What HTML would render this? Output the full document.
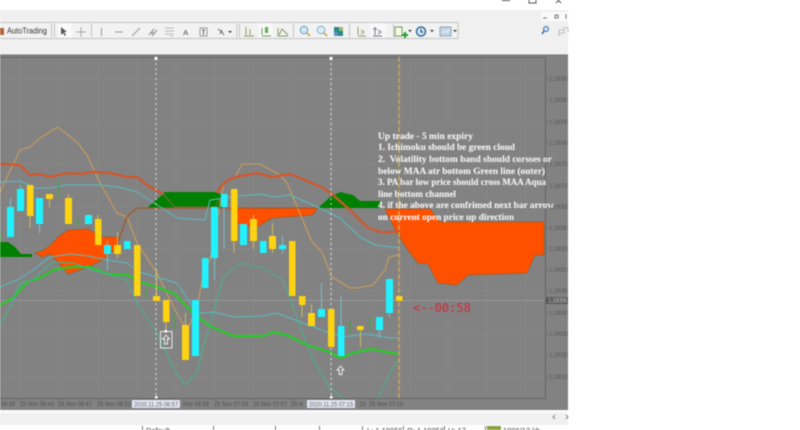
<!DOCTYPE html>
<html><head><meta charset="utf-8"><style>
html,body{margin:0;padding:0;width:800px;height:430px;overflow:hidden;background:#fff}
svg{display:block;filter:blur(.4px)}
.t{font-family:"Liberation Serif",serif;font-weight:bold;font-size:9.45px;fill:#f2f2f2;stroke:#f2f2f2;stroke-width:.12px}
.a{font-family:"Liberation Sans",sans-serif;font-size:6.2px;fill:#5e5e5e}
.x{font-family:"Liberation Sans",sans-serif;font-size:6.5px;fill:#505050}
.s{font-family:"Liberation Sans",sans-serif;font-size:7.5px;fill:#333}
.ln{fill:none;stroke-linejoin:round;stroke-linecap:round}
</style></head><body>
<svg width="800" height="430" viewBox="0 0 800 430" xmlns="http://www.w3.org/2000/svg">
<rect width="800" height="430" fill="#fff"/>
<rect x="0" y="10" width="568" height="415" fill="#f0f0f0"/>
<!-- window controls -->
<g stroke="#555" fill="none" stroke-width="1"><path d="M502 .5h8"/><rect x="529" y="-3" width="7" height="6"/><path d="M556 -2l5 5m0-5l-5 5"/></g>
<rect x="541" y="12" width="27" height="9" fill="#fafafa"/>
<g stroke="#777" fill="none" stroke-width="1"><path d="M543 18h4M555 15h3v3h-3zM566 14v5"/></g>
<!-- toolbar -->
<rect x="0" y="22" width="458" height="16" fill="#f2f2f2"/>
<path d="M0 22.5H458M0 38.5H458M458 22v17" stroke="#c4c4c4" fill="none"/>
<rect x="0" y="28" width="4" height="7" fill="#b5603a"/>
<text x="7" y="33.500" font-family="Liberation Sans,sans-serif" font-size="8.200" fill="#333" textLength="40" lengthAdjust="spacingAndGlyphs">AutoTrading</text>
<path d="M51.5 24v13M54.5 24v13M91.5 24v13M237 24v13M239.5 24v13M293.5 24v13M349.5 24v13M393.5 24v13" stroke="#c4c4c4" fill="none"/>
<rect x="58" y="23" width="14" height="15" fill="#fafafa"/>
<path d="M61 27l0 8 2-2 2 3 1-1-2-3 3 0z" fill="#555"/>
<path d="M81 27v10M76 32h10" stroke="#aaa" fill="none"/>
<path d="M101.500 28v8M115 32h8M132 36l8-8" stroke="#999" fill="none"/>
<path d="M149 35l5-6M152 36l5-6M150 33h5" stroke="#888" fill="none"/>
<path d="M165 28h9M165 31h9M165 34h9M170 36h3" stroke="#bbb" fill="none"/>
<text x="183" y="35" font-family="Liberation Sans,sans-serif" font-size="7.500" font-weight="bold" fill="#777">A</text>
<rect x="200" y="28" width="7" height="8" fill="#f5f5f5" stroke="#999"/><path d="M202 30h3M203.500 30v5" stroke="#666" fill="none"/>
<path d="M218 29l4 3 2 3M220 34l2-4" stroke="#666" fill="none"/><path d="M228 31h4l-2 2z" fill="#333"/>
<path d="M246 27v8M250 29v6M244 36h10" stroke="#8a9a60" fill="none"/>
<rect x="258" y="23" width="15" height="15" fill="#f8f8f8"/><rect x="265" y="27" width="3" height="6" fill="#5ab05a"/><path d="M262 28v7M262 36h9" stroke="#6a9a50" fill="none"/>
<path d="M279 35l3-6 4 4 2 2M278 28v8h10" stroke="#8a9a70" fill="none"/>
<circle cx="304" cy="30" r="3.800" fill="#cfe6f0" stroke="#6aa4c4"/><path d="M307 33l3 3" stroke="#c8a040" stroke-width="1.500"/>
<circle cx="321" cy="30" r="3.800" fill="#dcecf3" stroke="#7ab0cc"/><path d="M324 33l3 3" stroke="#c8a040" stroke-width="1.500"/>
<rect x="334" y="27" width="9" height="9" fill="#2a8a8a"/><rect x="339" y="27" width="4" height="4" fill="#9ab870"/><rect x="334" y="32" width="4" height="4" fill="#6090c0"/>
<path d="M358 27v8M358 36h8M361 30l3 2-3 2" stroke="#8a9a70" fill="none"/>
<rect x="370" y="23" width="16" height="15" fill="#f8f8f8"/><path d="M375 27v8M373 36h9M378 30l3 2-3 2M373 29h4" stroke="#778" fill="none"/>
<rect x="395" y="27" width="7" height="9" fill="#f5f8e8" stroke="#7a9a50"/><path d="M405 32v6M402 35h6" stroke="#20a030" stroke-width="2"/><path d="M408 30h4l-2 2z" fill="#333"/>
<circle cx="421" cy="31.500" r="4.500" fill="#dbe9f5" stroke="#2a6ea8" stroke-width="1.500"/><path d="M421 29v3h2" stroke="#234" fill="none"/><path d="M430 30h4l-2 2z" fill="#333"/>
<rect x="440" y="27" width="11" height="9" fill="#c4d6e4" stroke="#8aa6ba"/><path d="M442 33l3-2 2 1 3-3" stroke="#eee" fill="none"/><path d="M453 30h4l-2 2z" fill="#333"/>
<circle cx="546" cy="29" r="2.500" fill="#cfe3f2" stroke="#2f6ea8"/><path d="M544 31l-2 3" stroke="#2f5ea0" stroke-width="1.500"/>
<path d="M559 30h5v3h-3l-2 2zM563 28h5v4" fill="#f5f5f5" stroke="#bbb"/>
<!-- chart -->
<rect x="0" y="55" width="568" height="355" fill="#828282"/>
<path d="M0 55H568" stroke="#747474"/>
<path d="M0 57.500H545.500V398.500H0" stroke="#636363" fill="none"/>
<g stroke="#8f8f8f" stroke-width=".7" stroke-dasharray="2 2" fill="none">
<path d="M20 58V398M59 58V398M98 58V398M137 58V398M176 58V398M215 58V398M254 58V398M293 58V398M332 58V398M371 58V398M410 58V398M448 58V398M487 58V398M526 58V398"/>
<path d="M0 79H545M0 122H545M0 164H545M0 207H545M0 249H545M0 291H545M0 334H545M0 377H545"/>
</g>
<path d="M0 300.500H545" stroke="#989898"/>
<g stroke="#6c6c6c" fill="none"><path d="M20 398v3M59 398v3M98 398v3M137 398v3M176 398v3M215 398v3M254 398v3M293 398v3M332 398v3M371 398v3M545 79h3M545 100h3M545 122h3M545 143h3M545 164h3M545 186h3M545 207h3M545 228h3M545 249h3M545 270h3M545 291h3M545 313h3M545 334h3M545 355h3M545 377h3"/></g>
<!-- clouds -->
<g fill="#ff5000" stroke="#a85a20" stroke-width=".8">
<path d="M35 253L42 251L50 246L58 237L68 230L88 229L102 237L118 237L118 247L102 260L88 267L68 274L58 262L50 254L42 257Z"/>
<path d="M230 208L318 208L312 215L272 218L257 227L240 225L233 217Z"/>
<path d="M385 209L430 209L440 222L544 222L544 255L535 255L527 273L468 275L457 285L438 283L428 264L418 263L408 250L397 233Z"/>
</g>
<g fill="#008000">
<path d="M0 242L8 242L15 247L21 254L32 254L32 257L0 257Z"/>
<path d="M147 208L165 192L217 192L225 198L222 208Z"/>
<path d="M318 208L330 197L340 192L353 195L360 201L380 201L380 208Z"/>
</g>
<path d="M0 231V242" stroke="#30c030"/>
<!-- indicator lines -->
<g class="ln" stroke="#cb9c5c" stroke-width="1.100">
<polyline points="0,192 20,150 30,147 40,138 58,127 78,143 88,157 100,183 117,213 127,217 137,243 157,273 175,310 185,327 190,325 199,297 204,270 210,260"/>
<polyline points="210,260 224,183 235,177 242,164 260,164 280,175 287,183 312,242 322,252 332,277 337,280 350,288 357,288 373,285 385,270 389,257 399,255"/>
</g>
<g class="ln" stroke="#d5562a" stroke-width="2.200">
<polyline points="0,164 20,165 30,175 40,174 50,177 67,173 80,174 93,172 110,173 127,177 137,177 147,185 163,194"/>
<polyline points="217,192 225,182 235,177 257,173 272,177 290,174 305,180 323,188 333,195 350,210 367,227 380,232 390,232 400,232"/>
</g>
<path class="ln" d="M163 194L175 207H215L222 195" stroke="#7d6a3a" stroke-width="1"/>
<path class="ln" d="M118 242L127 217L137 208H318" stroke="#a0592c" stroke-width="1.300"/>
<g class="ln" stroke="#58bcc4" stroke-width="1">
<polyline points="0,182 20,181 35,188 50,188 67,185 100,185 118,187 137,192 157,205 177,218 205,220 210,200 225,198 238,196 262,194 273,197 290,195 313,205 330,213 340,218 360,237 375,245 390,247 398,247"/>
<polyline points="0,287 17,280 33,270 50,257 70,254 88,256 107,260 127,263 140,272 160,278 177,283 193,307 200,313 213,312 235,317 263,316 277,313 303,323 327,332 343,337 367,334 390,338 398,338"/>
</g>
<g class="ln" stroke="#27cc27" stroke-width="2.200">
<polyline points="0,305 13,298 27,282 40,278 53,270 70,267 90,267 107,274 128,275 140,282 157,287 175,294 190,310 199,318 210,326 233,336 263,336 273,332 287,335 307,345 330,352 340,358 353,353 370,349 398,354"/>
</g>
<g class="ln" stroke="#48b48e" stroke-width="1">
<polyline points="0,325 10,307 20,283 33,280 43,270 53,262 73,263 93,270 127,280 137,303 157,333 173,367 185,385 197,373 203,348 223,278 240,263 263,268 283,280 312,358 330,388 343,398"/>
<polyline points="378,398 390,373 398,360"/>
</g>
<!-- white dashes -->
<path d="M156 58V398M331 58V398" stroke="#eaeaea" stroke-width=".9" stroke-dasharray="2 3" fill="none"/>
<path d="M399 57V398" stroke="#cda55a" stroke-width="1.500" stroke-dasharray="5 2" fill="none"/>
<rect x="154.500" y="57" width="3" height="3" fill="#fff"/><rect x="329.500" y="57" width="3" height="3" fill="#fff"/>
<rect x="155" y="396" width="2.500" height="2.500" fill="#fff"/><rect x="330" y="396" width="2.500" height="2.500" fill="#fff"/>
<!-- thin green arrows -->
<path d="M59 180V198M78 218V225M146 288V297M175 313V330M350 321V334M370 317V330" stroke="#3aa83a" fill="none"/>
<!-- wicks yellow -->
<path d="M30 216V228M49.500 199V207M68.500 194V198M98 215V219M117.500 232V258M156.500 270V296M166 322V332M185.500 313V325M234 241V253M253.500 215V249M272.500 223V253M302 305V317M311.500 304V313M360.500 330V347" stroke="#cdbb5c" fill="none"/>
<!-- wicks cyan -->
<path d="M10.500 198V207M20.500 185V189M39.500 224V233M107.500 241V270M214.500 258V280M224 207V249M282.500 236V253M321.500 283V309M341 296V326M379.500 330V338M389.500 313V317" stroke="#76c2c8" fill="none"/>
<!-- candles cyan -->
<g fill="#1ff3ff">
<rect x="7" y="207" width="7" height="30"/><rect x="17" y="189" width="7" height="22"/><rect x="36" y="198" width="7" height="26"/><rect x="85" y="215" width="7" height="9"/><rect x="104" y="245" width="7" height="9"/><rect x="124" y="241" width="6.500" height="8"/><rect x="192" y="300" width="7" height="56"/><rect x="202" y="258" width="6.500" height="30"/><rect x="211" y="207" width="7" height="51"/><rect x="221" y="194" width="6.500" height="13"/><rect x="240" y="224" width="7" height="21"/><rect x="260" y="241" width="6.500" height="12"/><rect x="279" y="245" width="7" height="4"/><rect x="318" y="309" width="7" height="8"/><rect x="338" y="326" width="6.500" height="30"/><rect x="376" y="317" width="7" height="13"/><rect x="386" y="279" width="7" height="34"/>
</g>
<!-- candles yellow -->
<g fill="#fdd312">
<rect x="27" y="185" width="6.500" height="31"/><rect x="46" y="194" width="7" height="5"/><rect x="65" y="198" width="7" height="26"/><rect x="95" y="219" width="6.500" height="26"/><rect x="114" y="245" width="7" height="9"/><rect x="134" y="245" width="6.500" height="51"/><rect x="153" y="296" width="7" height="5"/><rect x="163" y="300" width="6.500" height="22"/><rect x="182" y="325" width="7" height="35"/><rect x="231" y="189" width="6.500" height="52"/><rect x="250" y="219" width="7" height="22"/><rect x="269" y="236" width="7" height="13"/><rect x="289" y="241" width="6.500" height="55"/><rect x="299" y="296" width="6.500" height="9"/><rect x="308" y="313" width="7" height="13"/><rect x="328" y="309" width="6.500" height="38"/><rect x="357" y="326" width="6.500" height="4"/><rect x="396" y="296" width="6.500" height="5"/>
</g>
<!-- arrows -->
<rect x="160.500" y="331.500" width="11.500" height="16.500" fill="none" stroke="#e8e8e8"/>
<rect x="164.500" y="330" width="2.500" height="2.500" fill="#fff"/>
<path d="M166 335l-3.500 4h2v5h3v-5h2z" fill="#8a8a8a" stroke="#f0f0f0" stroke-width=".9"/>
<path d="M340.500 366l-3.500 4h2v4.500h3v-4.500h2z" fill="#8a8a8a" stroke="#f0f0f0" stroke-width=".9"/>
<!-- annotation -->
<text class="t" x="378" y="139" textLength="95" lengthAdjust="spacingAndGlyphs">Up trade - 5 min expiry</text>
<text class="t" x="378" y="150" textLength="137" lengthAdjust="spacingAndGlyphs">1. Ichimoku should be green cloud</text>
<text class="t" x="378" y="162" xml:space="preserve" textLength="174" lengthAdjust="spacingAndGlyphs">2.  Volatility bottom band should corsses or</text>
<text class="t" x="378" y="174" textLength="167" lengthAdjust="spacingAndGlyphs">below MAA atr bottom Green line (outer)</text>
<text class="t" x="378" y="185" textLength="168" lengthAdjust="spacingAndGlyphs">3. PA bar low price should cross MAA Aqua</text>
<text class="t" x="378" y="197" textLength="78" lengthAdjust="spacingAndGlyphs">line bottom channel</text>
<text class="t" x="378" y="208" textLength="176" lengthAdjust="spacingAndGlyphs">4. if the above are confrimed next bar arrow</text>
<text class="t" x="378" y="220" textLength="136" lengthAdjust="spacingAndGlyphs">on current open price up direction</text>
<text x="413" y="312" font-family="DejaVu Sans Mono,monospace" font-size="12" fill="#d0283a">&lt;--00:58</text>
<!-- price axis -->
<g class="a">
<text x="549" y="81" textLength="19">1.19095</text><text x="549" y="102" textLength="19">1.19090</text><text x="549" y="124" textLength="19">1.19085</text><text x="549" y="145" textLength="19">1.19080</text><text x="549" y="166" textLength="19">1.19075</text><text x="549" y="188" textLength="19">1.19070</text><text x="549" y="209" textLength="19">1.19065</text><text x="549" y="230" textLength="19">1.19060</text><text x="549" y="251" textLength="19">1.19055</text><text x="549" y="272" textLength="19">1.19050</text><text x="549" y="293" textLength="19">1.19045</text><text x="549" y="315" textLength="19">1.19040</text><text x="549" y="336" textLength="19">1.19035</text><text x="549" y="357" textLength="19">1.19030</text><text x="549" y="379" textLength="19">1.19025</text>
</g>
<rect x="546" y="297" width="22" height="7" fill="#5a5a5a"/>
<text class="a" x="548" y="302.500" style="fill:#b8b8b8" textLength="19">1.19056</text>
<!-- time axis -->
<g class="x">
<text x="1" y="406" textLength="14" lengthAdjust="spacingAndGlyphs">06:39</text><text x="20" y="406" textLength="34" lengthAdjust="spacingAndGlyphs">25 Nov 06:43</text><text x="58" y="406" textLength="34" lengthAdjust="spacingAndGlyphs">25 Nov 06:47</text><text x="97" y="406" textLength="34" lengthAdjust="spacingAndGlyphs">25 Nov 06:51</text>
<text x="183" y="406" textLength="26" lengthAdjust="spacingAndGlyphs">Nov 06:59</text><text x="214" y="406" textLength="34" lengthAdjust="spacingAndGlyphs">25 Nov 07:03</text><text x="253" y="406" textLength="34" lengthAdjust="spacingAndGlyphs">25 Nov 07:07</text><text x="291" y="406" textLength="12" lengthAdjust="spacingAndGlyphs">25 N</text>
<text x="358" y="406" textLength="8" lengthAdjust="spacingAndGlyphs">:15</text><text x="369" y="406" textLength="34" lengthAdjust="spacingAndGlyphs">25 Nov 07:19</text>
</g>
<rect x="132" y="400" width="48" height="8" fill="#e4e4f4"/>
<rect x="307" y="400" width="48" height="8" fill="#e4e4f4"/>
<text x="134" y="406.300" font-family="Liberation Sans,sans-serif" font-size="6.400" fill="#666" textLength="44" lengthAdjust="spacingAndGlyphs">2020.11.25 06:57</text>
<text x="309" y="406.300" font-family="Liberation Sans,sans-serif" font-size="6.400" fill="#666" textLength="44" lengthAdjust="spacingAndGlyphs">2020.11.25 07:15</text>
<!-- bottom -->
<rect x="0" y="410" width="568" height="3" fill="#fbfbfb"/>
<rect x="0" y="413" width="568" height="12" fill="#f0f0f0"/>
<path d="M555 415l-2 2 2 2M566 415l2 2-2 2" stroke="#888" fill="none"/>
<rect x="0" y="425" width="568" height="5" fill="#fff"/>
<path d="M142.500 426v4M213.500 426v4M275.500 426v4M319.500 426v4M362.500 426v4M403.500 426v4M444.500 426v4M485.500 426v4" stroke="#777" fill="none"/>
<text class="s" x="146" y="433">Default</text>
<text class="s" x="367" y="433">L: 1.19056</text>
<text class="s" x="407" y="433">O: 1.19056</text>
<text class="s" x="448" y="433">H: 17</text>
<rect x="487" y="426" width="14" height="4" fill="#8aa040"/>
<text class="s" x="503" y="433">1896/13 kb</text>
</svg>
</body></html>
